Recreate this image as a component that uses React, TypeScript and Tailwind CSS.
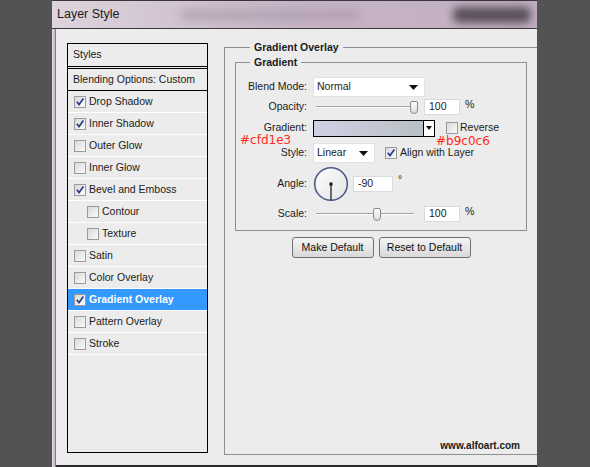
import React from "react";

// fuente tipo Tahoma con las medidas de Arial
const ui = { fontFamily: '"Liberation Sans", Arial, sans-serif' };
const note = { fontFamily: '"DejaVu Sans", Verdana, sans-serif' };

type Item = { label: string; checked?: boolean; indent?: boolean; active?: boolean };

const items: Item[] = [
  { label: "Drop Shadow", checked: true },
  { label: "Inner Shadow", checked: true },
  { label: "Outer Glow" },
  { label: "Inner Glow" },
  { label: "Bevel and Emboss", checked: true },
  { label: "Contour", indent: true },
  { label: "Texture", indent: true },
  { label: "Satin" },
  { label: "Color Overlay" },
  { label: "Gradient Overlay", checked: true, active: true },
  { label: "Pattern Overlay" },
  { label: "Stroke" },
];

function Check({ checked }: { checked?: boolean }) {
  return (
    <span className="flex h-[12px] w-[12px] shrink-0 items-center justify-center border border-[#999a9a] bg-gradient-to-br from-[#d9d9d9] to-[#fbfbfb]">
      {checked && (
        <svg width="10" height="10" viewBox="0 0 10 10">
          <path d="M1.8 4.8 L4 7.6 L8.4 1.6" stroke="#2c3f8f" strokeWidth="1.7" fill="none" />
        </svg>
      )}
    </span>
  );
}

function Arrow() {
  return (
    <svg width="9" height="5" viewBox="0 0 9 5">
      <path d="M0 0 H9 L4.5 5 Z" fill="#111" />
    </svg>
  );
}

function Select({ value, width }: { value: string; width: string }) {
  return (
    <div className={`flex h-[20px] items-center justify-between border border-[#e2e2e2] bg-white pl-[3px] pr-[6px] ${width}`}>
      <span>{value}</span>
      <Arrow />
    </div>
  );
}

function Field({ value, width }: { value: string; width: string }) {
  return (
    <div className={`flex h-[16px] items-center border border-[#dadada] bg-white pl-[4px] ${width}`}>
      {value}
    </div>
  );
}

function Slider({ thumb }: { thumb: string }) {
  return (
    <div className="relative flex h-[20px] w-[111px] items-center">
      <div className="ml-[3px] h-[2px] w-[98px] border-t border-b border-t-[#a2a2a2] border-b-white" />
      <div
        className={`absolute top-[4px] h-[13px] w-[8px] rounded-[2px] rounded-b-[4px] border border-[#8a8a8a] bg-gradient-to-b from-white to-[#dcdcdc] ${thumb}`}
      />
    </div>
  );
}

function Row({ label, h, children }: { label: string; h: string; children: React.ReactNode }) {
  return (
    <div className={`relative flex items-center ${h}`}>
      <span className="w-[71px] text-right">{label}</span>
      <div className="ml-[6px] flex items-center">{children}</div>
    </div>
  );
}

export default function App() {
  return (
    <div className="flex h-[467px] w-[590px] overflow-hidden bg-[#535353] text-[10.5px] text-[#1b1b1b]" style={ui}>
      <div className="ml-[52px] flex h-[467px] w-[485px] flex-col">
        {/* barra de titulo difuminada */}
        <div className="flex h-[29px] items-center overflow-hidden border-t border-b border-t-[#3a353a] border-b-[#3d3a3e] bg-gradient-to-r from-[#ddd4dc] via-[#c6b4c6] to-[#c2afc2] pl-[5px]">
          <span className="text-[12.5px] text-[#1a1a1a]">Layer Style</span>
          <span className="ml-[60px] h-[10px] w-[180px] rounded-full bg-[#a595a6] opacity-60 blur-[4px]" />
          <span className="ml-auto mr-[6px] h-[16px] w-[78px] rounded-[6px] bg-[#4f454f] opacity-90 blur-[4px]" />
        </div>

        <div className="flex flex-1">
          <div className="w-[5px] border-r border-r-[#8a7c8a] bg-gradient-to-r from-[#e6dde6] to-[#c3b0c4]" />
          <div className="flex flex-1 border-b-2 border-b-[#2a2a2a] bg-[#ececec]">
            {/* lista de estilos */}
            <div className="ml-[11px] mt-[14px] flex h-[410px] w-[141px] flex-col border border-black">
              <div className="flex h-[25px] items-center border-b-[3px] border-double border-b-black pl-[5px]">
                Styles
              </div>
              <div className="flex h-[22px] items-center border-b border-b-black pl-[5px]">
                Blending Options: Custom
              </div>
              {items.map((it) => (
                <div
                  key={it.label}
                  className={`flex h-[22px] items-center gap-[3px] border-b border-b-white ${
                    it.indent ? "pl-[19px]" : "pl-[6px]"
                  } ${it.active ? "bg-[#3399ff] font-bold text-white" : ""}`}
                >
                  <Check checked={it.checked} />
                  <span>{it.label}</span>
                </div>
              ))}
            </div>

            {/* Gradient Overlay */}
            <fieldset className="ml-[16px] mt-[11px] flex h-[415px] w-[313px] flex-col border-t border-l border-b border-[#8e8e8e] pl-[10px]">
              <legend className="ml-[15px] px-[4px] text-[10.5px] font-bold leading-[14px]">Gradient Overlay</legend>

              <fieldset className="mt-[1px] h-[176px] w-[292px] border border-[#8e8e8e]">
                <legend className="ml-[14px] px-[4px] font-bold leading-[14px]">Gradient</legend>
                <div className="mt-[8px] flex flex-col">
                  <Row label="Blend Mode:" h="h-[20px]">
                    <Select value="Normal" width="w-[112px]" />
                  </Row>
                  <Row label="Opacity:" h="h-[20px]">
                    <Slider thumb="left-[97px]" />
                    <Field value="100" width="w-[36px]" />
                    <span className="ml-[5px] -mt-[4px]">%</span>
                  </Row>
                  <Row label="Gradient:" h="h-[22px]">
                    <div className="flex h-[17px] w-[122px] border border-black">
                      <div className="flex-1 bg-gradient-to-r from-[#cfd1e3] to-[#b9c0c6]" />
                      <div className="flex w-[11px] items-center justify-center border-l border-l-black bg-white">
                        <svg width="6" height="4" viewBox="0 0 6 4">
                          <path d="M0 0 H6 L3 4 Z" fill="#111" />
                        </svg>
                      </div>
                    </div>
                    <span className="ml-[11px]">
                      <Check />
                    </span>
                    <span className="ml-[2px]">Reverse</span>
                    <span className="absolute left-[4px] top-[17px] text-[12px] leading-none text-[#ff2a1a]" style={note}>
                      #cfd1e3
                    </span>
                    <span className="absolute left-[200px] top-[18px] text-[12px] leading-none text-[#ff2a1a]" style={note}>
                      #b9c0c6
                    </span>
                  </Row>
                  <div className="mt-[4px]">
                    <Row label="Style:" h="h-[20px]">
                      <Select value="Linear" width="w-[62px]" />
                      <span className="ml-[10px]">
                        <Check checked />
                      </span>
                      <span className="ml-[3px]">Align with Layer</span>
                    </Row>
                  </div>
                  <div className="mt-[3px]">
                    <Row label="Angle:" h="h-[36px]">
                      <svg width="36" height="36" viewBox="0 0 36 36">
                        <defs>
                          <linearGradient id="dial" x1="0" y1="0" x2="1" y2="1">
                            <stop offset="0" stopColor="#fdfdfd" />
                            <stop offset="1" stopColor="#e4e4e4" />
                          </linearGradient>
                        </defs>
                        <circle cx="18" cy="18" r="16.3" fill="url(#dial)" stroke="#4d5c86" strokeWidth="1.6" />
                        <rect x="16.5" y="16.5" width="3" height="3" fill="#111" />
                        <line x1="18" y1="18" x2="18" y2="34.5" stroke="#111" strokeWidth="1.2" />
                      </svg>
                      <span className="ml-[4px]">
                        <Field value="-90" width="w-[40px]" />
                      </span>
                      <span className="ml-[5px] -mt-[8px]">°</span>
                    </Row>
                  </div>
                  <div className="mt-[2px]">
                    <Row label="Scale:" h="h-[20px]">
                      <Slider thumb="left-[60px]" />
                      <Field value="100" width="w-[36px]" />
                      <span className="ml-[5px] -mt-[4px]">%</span>
                    </Row>
                  </div>
                </div>
              </fieldset>

              <div className="mt-[6px] flex w-[292px] justify-center gap-[5px]">
                <button className="h-[21px] w-[82px] rounded-[3px] border border-[#707070] bg-gradient-to-b from-[#f4f4f4] to-[#d9d9d9] text-[10.5px] text-[#111]">
                  Make Default
                </button>
                <button className="h-[21px] w-[92px] rounded-[3px] border border-[#707070] bg-gradient-to-b from-[#f4f4f4] to-[#d9d9d9] text-[10.5px] text-[#111]">
                  Reset to Default
                </button>
              </div>

              <div className="flex-1" />
              <div className="mb-[1px] self-end pr-[17px] text-[10px] font-bold text-[#1a1a1a]">www.alfoart.com</div>
            </fieldset>
          </div>
        </div>
      </div>
    </div>
  );
}
